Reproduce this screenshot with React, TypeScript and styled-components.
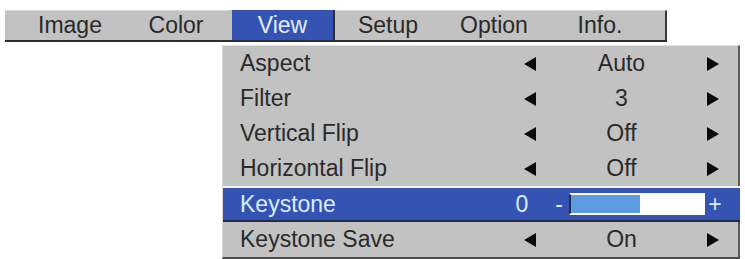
import React from "react";
import styled, { createGlobalStyle } from "styled-components";

const Global = createGlobalStyle`
  html, body { margin: 0; padding: 0; background: #ffffff; }
  body { font-family: "Liberation Sans", Arial, sans-serif; }
`;

const Page = styled.div`
  width: 745px;
  height: 259px;
  padding: 10px 0 0 5px;
  box-sizing: border-box;
  overflow: hidden;
`;

const MenuBar = styled.div`
  width: 662px;
  height: 32px;
  box-sizing: border-box;
  display: flex;
  align-items: stretch;
  padding-left: 12px;
  background: #c2c2c2;
  border-top: 1px solid #d8d8d8;
  border-right: 2px solid #3a3a3a;
  border-bottom: 2px solid #2e2e2e;
`;

const Tab = styled.div<{ $active?: boolean }>`
  width: 106px;
  box-sizing: border-box;
  display: flex;
  align-items: center;
  justify-content: center;
  font-size: 23px;
  color: ${(p) => (p.$active ? "#e4eeff" : "#2a2a2a")};
  background: ${(p) => (p.$active ? "#3453b3" : "transparent")};
  border-left: ${(p) => (p.$active ? "3px solid #c2c2c2" : "none")};
  border-right: ${(p) => (p.$active ? "2px solid #2e2e2e" : "none")};
  margin-top: ${(p) => (p.$active ? "-1px" : "0")};
`;

const Panel = styled.div`
  margin: 3px 0 0 217px;
  width: 518px;
  box-sizing: border-box;
  background: #c2c2c2;
  border-top: 1px solid #e2e2e2;
  border-left: 1px solid #d6d6d6;
  border-right: 2px solid #5a5a5a;
  border-bottom: 2px solid #4a4a4a;
`;

const Row = styled.div`
  height: 35px;
  box-sizing: border-box;
  display: grid;
  grid-template-columns: 1fr 20px 163px 20px;
  align-items: center;
  padding: 0 15px 0 17px;
  font-size: 23px;
  color: #2a2a2a;
`;

const ActiveRow = styled.div`
  height: 36px;
  box-sizing: border-box;
  display: grid;
  grid-template-columns: 1fr 30px 32px 136px 20px;
  align-items: center;
  padding: 0 15px 0 17px;
  font-size: 23px;
  color: #dcecff;
  background: #3453b3;
  border-top: 2px solid #f4f4f4;
  border-bottom: 2px solid #2a2a3a;
  margin-right: -2px;
`;

const Label = styled.span`
  white-space: nowrap;
`;

const Value = styled.span`
  text-align: center;
`;

const ArrowSvg = styled.svg`
  display: block;
  justify-self: center;
  width: 12px;
  height: 14px;
`;

const Arrow = ({ dir }: { dir: "left" | "right" }) => (
  <ArrowSvg viewBox="0 0 12 14">
    <polygon
      points={dir === "left" ? "12,0 12,14 0,7" : "0,0 0,14 12,7"}
      fill="#0a0a0a"
    />
  </ArrowSvg>
);

const Num = styled.span`
  text-align: center;
`;

const Sign = styled.span<{ $align: "right" | "center" }>`
  text-align: ${(p) => p.$align};
  padding-right: ${(p) => (p.$align === "right" ? "6px" : "0")};
`;

const Track = styled.div`
  height: 22px;
  box-sizing: border-box;
  background: #ffffff;
  border: 2px solid #ffffff;
  border-left: 2px solid #1f2a55;
  display: flex;
`;

const Fill = styled.div`
  height: 100%;
  background: #5b9be0;
`;

type Item = { label: string; value: string };

const items: Item[] = [
  { label: "Aspect", value: "Auto" },
  { label: "Filter", value: "3" },
  { label: "Vertical Flip", value: "Off" },
  { label: "Horizontal Flip", value: "Off" },
];

const tabs = ["Image", "Color", "View", "Setup", "Option", "Info."];

export default function App() {
  const level = 52;
  return (
    <Page>
      <Global />
      <MenuBar>
        {tabs.map((t) => (
          <Tab key={t} $active={t === "View"}>
            {t}
          </Tab>
        ))}
      </MenuBar>
      <Panel>
        {items.map((it) => (
          <Row key={it.label}>
            <Label>{it.label}</Label>
            <Arrow dir="left" />
            <Value>{it.value}</Value>
            <Arrow dir="right" />
          </Row>
        ))}
        <ActiveRow>
          <Label>Keystone</Label>
          <Num>0</Num>
          <Sign $align="right">-</Sign>
          <Track>
            <Fill style={{ width: `${level}%` }} />
          </Track>
          <Sign $align="center">+</Sign>
        </ActiveRow>
        <Row>
          <Label>Keystone Save</Label>
          <Arrow dir="left" />
          <Value>On</Value>
          <Arrow dir="right" />
        </Row>
      </Panel>
    </Page>
  );
}
